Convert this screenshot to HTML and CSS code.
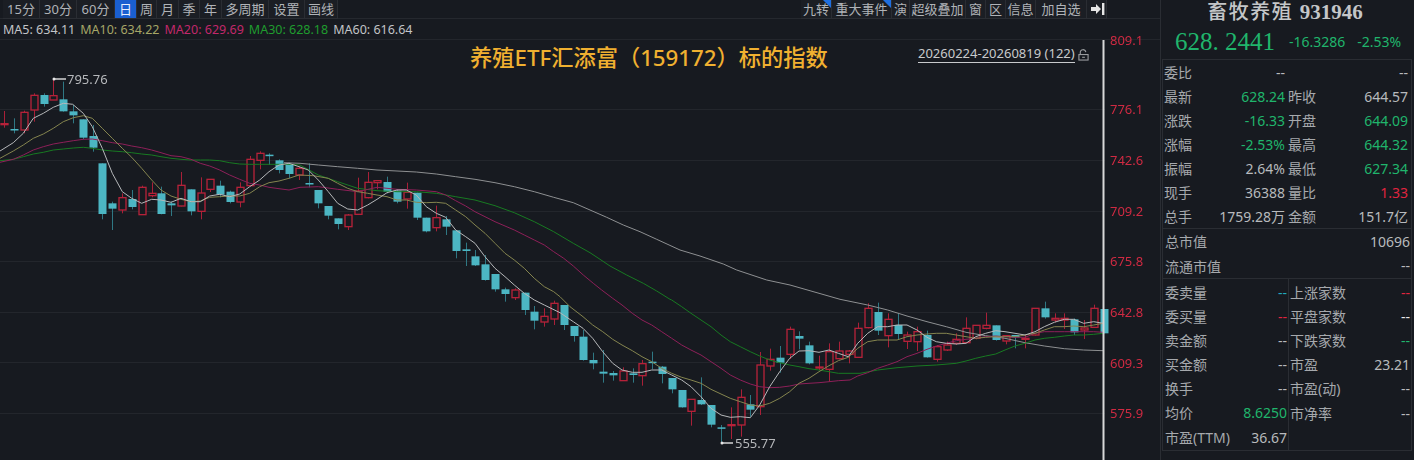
FILE: index.html
```html
<!DOCTYPE html>
<html lang="zh-CN">
<head>
<meta charset="utf-8">
<title>畜牧养殖 931946</title>
<link rel="stylesheet" href="styles.css">
</head>
<body>
<div class="app">
  <main class="main">
    <nav class="toolbar">
      <div class="tools tools-left">
        <span class="tool">15分</span><span class="tool">30分</span><span class="tool">60分</span><span class="tool active">日</span><span class="tool">周</span><span class="tool">月</span><span class="tool">季</span><span class="tool">年</span><span class="tool">多周期</span><span class="tool">设置</span><span class="tool">画线</span>
      </div>
      <div class="tools tools-right">
        <span class="tool flag">九转</span><span class="tool flag">重大事件</span><span class="tool">演</span><span class="tool">超级叠加</span><span class="tool">窗</span><span class="tool">区</span><span class="tool">信息</span><span class="tool">加自选</span>
        <span class="tool"><svg class="arrow" viewBox="0 0 14 12"><path d="M0 4h5V1l5 5-5 5V8H0z"/><path d="M11 0h2.4v12H11z"/></svg></span>
      </div>
    </nav>
    <div class="ma-row">
      <span class="ma5">MA5: 634.11</span><span class="ma10">MA10: 634.22</span><span class="ma20">MA20: 629.69</span><span class="ma30">MA30: 628.18</span><span class="ma60">MA60: 616.64</span>
    </div>
    <section class="chart">
      <svg id="kline" class="kline" viewBox="0 40 1161 420"></svg>
      <h1 class="headline">养殖ETF汇添富（159172）标的指数</h1>
      <div class="range"><span class="range-text">20260224-20260819 (122)</span>
        <svg class="lock" viewBox="0 0 12 12"><path d="M2.5 5.5V3.5a3 3 0 0 1 6-.6" fill="none"/><rect x="1" y="5.5" width="10" height="6" fill="none"/><path d="M4.5 8.5h3"/></svg>
      </div>
    </section>
  </main>
  <aside class="panel">
    <div class="name">畜牧养殖 <b>931946</b></div>
    <div class="quote"><span class="price">628.&nbsp;2441</span><span class="chg">-16.3286</span><span class="chg">-2.53%</span></div>
    <div class="box">
      <div class="grid one">
        <div class="kv"><span>委比</span><em>--</em></div><div class="kv"><span>&nbsp;</span><em>--</em></div>
        <div class="kv"><span>最新</span><em class="up">628.24</em></div><div class="kv"><span>昨收</span><em>644.57</em></div>
        <div class="kv"><span>涨跌</span><em class="up">-16.33</em></div><div class="kv"><span>开盘</span><em class="up">644.09</em></div>
        <div class="kv"><span>涨幅</span><em class="up">-2.53%</em></div><div class="kv"><span>最高</span><em class="up">644.32</em></div>
        <div class="kv"><span>振幅</span><em>2.64%</em></div><div class="kv"><span>最低</span><em class="up">627.34</em></div>
        <div class="kv"><span>现手</span><em>36388</em></div><div class="kv"><span>量比</span><em class="red">1.33</em></div>
        <div class="kv"><span>总手</span><em>1759.28万</em></div><div class="kv"><span>金额</span><em>151.7亿</em></div>
      </div>
      <div class="wide">
        <div class="kv"><span>总市值</span><em>10696</em></div>
        <div class="kv"><span>流通市值</span><em>--</em></div>
      </div>
      <div class="split">
        <div class="col">
          <div class="kv"><span>委卖量</span><em class="cyan">--</em></div>
          <div class="kv"><span>委买量</span><em class="red">--</em></div>
          <div class="kv"><span>卖金额</span><em>--</em></div>
          <div class="kv"><span>买金额</span><em>--</em></div>
          <div class="kv"><span>换手</span><em>--</em></div>
          <div class="kv"><span>均价</span><em class="up">8.6250</em></div>
          <div class="kv"><span>市盈(TTM)</span><em>36.67</em></div>
        </div>
        <div class="col">
          <div class="kv"><span>上涨家数</span><em class="red">--</em></div>
          <div class="kv"><span>平盘家数</span><em class="white">--</em></div>
          <div class="kv"><span>下跌家数</span><em class="up">--</em></div>
          <div class="kv"><span>市盈</span><em>23.21</em></div>
          <div class="kv"><span>市盈(动)</span><em>--</em></div>
          <div class="kv"><span>市净率</span><em>--</em></div>
        </div>
      </div>
    </div>
  </aside>
</div>
<script src="chart.js"></script>
</body>
</html>
```
FILE: styles.css
```css
* { box-sizing: border-box; margin: 0; padding: 0; }
html, body { width: 1414px; height: 460px; overflow: hidden; background: #171a20; }
body { font-family: "Noto Sans", "Noto Sans CJK SC", sans-serif; font-size: 13px; color: #b4b7bb; }
.app { display: flex; width: 1414px; height: 460px; }
.main { width: 1161px; display: flex; flex-direction: column; border-right: 1px solid #2a2d33; }

.toolbar { height: 19px; display: flex; justify-content: space-between; padding: 0 53px 0 3px; border-bottom: 1px solid #25282e; }
.tools { display: grid; height: 19px; }
.tools-left { grid-template-columns: 37px 37px 38px 22px 20px 22px 21px 22px 47px 36px 33px; }
.tools-right { grid-template-columns: 31px 60px 18px 56px 20px 20px 30px 51px 20px; }
.tool { position: relative; display: flex; align-items: center; justify-content: center; background: #1b1e24; border-right: 1px solid #2a2d33; border-bottom: 1px solid #2a2d33; line-height: 18px; color: #b0b3b7; white-space: nowrap; }
.tool.active { background: #1a5fd0; color: #e8eefc; }
.flag::after { content: ""; position: absolute; top: 0; right: 0; border-style: solid; border-width: 0 8px 8px 0; border-color: transparent #1f6fe0 transparent transparent; }
.arrow { width: 14px; height: 12px; margin-left: 3px; fill: #e6e6e6; }

.ma-row { height: 21px; display: flex; gap: 5px; align-items: center; padding-left: 3px; font-size: 12.5px; border-bottom: 1px solid #23262c; }
.ma5, .ma60 { color: #c2c4c7; }
.ma10 { color: #a6a667; }
.ma20 { color: #c2286b; }
.ma30 { color: #1f9c2e; }

.chart { position: relative; flex: 1; }
.kline { display: block; width: 1161px; height: 420px; overflow: visible; filter: blur(.3px); }
.kline text { font-size: 13px; font-family: "Noto Sans", sans-serif; }
.grid-line { stroke: #23262c; stroke-width: 1; }
.axis { stroke: #d8d8d8; stroke-width: 2; }
.axis-label { fill: #cf2a42; }
.wick-red { stroke: #a92038; stroke-width: 1; }
.wick-cyan { stroke: #2f7884; stroke-width: 1; }
.body-red { fill: #171a20; stroke: #b8223a; stroke-width: 1.3; }
.body-cyan { fill: #4cb6c3; }
.line { fill: none; stroke-width: 1; stroke-linejoin: round; }
.l5 { stroke: #b6b8ba; }
.l10 { stroke: #85854f; }
.l20 { stroke: #8e2059; }
.l30 { stroke: #187a22; }
.l60 { stroke: #8e9092; }
.mark { stroke: #d4d4d4; stroke-width: 1.5; }
.mark-dot { fill: #e6e6e6; }
.mark-text { fill: #b6b8bb; }

.headline { position: absolute; left: 470px; top: 4px; font-size: 22.25px; line-height: 28px; font-weight: 500; color: #f0b030; white-space: nowrap; }
.range { position: absolute; left: 918px; top: 4px; display: flex; gap: 3px; align-items: flex-start; color: #c8cacc; }
.range-text { border-bottom: 1px solid #c8cacc; line-height: 18px; }
.lock { width: 11px; height: 12px; margin-top: 5px; fill: none; stroke: #9a9c9f; stroke-width: 1.2; }

.panel { flex: 1; display: flex; flex-direction: column; padding-left: 1px; font-size: 14px; }
.name { height: 24px; line-height: 24px; padding-right: 6px; text-align: center; font-size: 20px; font-weight: 500; letter-spacing: 1.5px; color: #c4c6c8; white-space: nowrap; }
.name b { font-family: "Liberation Serif", serif; font-size: 21px; letter-spacing: 0; }
.quote { height: 35px; display: flex; align-items: center; color: #20b56c; padding-left: 13px; font-size: 14px; }
.price { font-family: "Liberation Serif", serif; font-size: 25px; width: 114px; white-space: nowrap; }
.chg { margin-right: 12px; }
.box { margin-right: 2px; border: 1px solid #2a2d33; height: 392px; flex: none; }
.grid.one { display: grid; grid-template-columns: 124px 121px; grid-auto-rows: 24px; padding: 0 2px 0 1px; height: 169px; border-bottom: 1px solid #2a2d33; }
.one .kv:nth-child(odd) { padding-right: 3px; }
.wide { height: 50px; padding: 0 0 0 2px; border-bottom: 1px solid #2a2d33; }
.wide .kv { height: 24.5px; }
.split { display: flex; height: 172px; border-bottom: 1px solid #2a2d33; padding-top: 1px; }
.col { width: 125px; padding-left: 2px; }
.col + .col { width: 123px; padding-left: 1px; border-left: 1px solid #2a2d33; margin-top: -1px; padding-top: 1px; }
.col .kv { height: 24px; }
.col .kv:last-child { height: 26px; }
.kv { display: flex; justify-content: space-between; align-items: center; height: 24px; padding-right: 1px; white-space: nowrap; color: #a6a9ad; }
.kv em { font-style: normal; color: #b8babd; }
em.up { color: #20b56c; }
em.red { color: #e0243f; }
em.cyan { color: #21a9bd; }
em.white { color: #e8e8e8; }
```
FILE: chart.js
```js
(function () {
  var NS = 'http://www.w3.org/2000/svg';
  var svg = document.getElementById('kline');
  function add(tag, attrs, text) {
    var el = document.createElementNS(NS, tag);
    for (var k in attrs) el.setAttribute(k, attrs[k]);
    if (text) el.textContent = text;
    svg.appendChild(el);
    return el;
  }
  // candles: type, body top, body bottom, high, low, read at 3x from an origin y
  function seg(oy, rows) {
    return rows.map(function (r) {
      return { t: r[0], a: oy + r[1] / 3, b: oy + r[2] / 3, h: oy + r[3] / 3, l: oy + r[4] / 3 };
    });
  }
  var R = 'r', C = 'c';
  var candles = [].concat(
    seg(70, [
      [R,161,163,123,173],[C,177,179,145,190],[R,127,180,122,190],[R,76,120,70,155],[C,75,102,70,110],
      [R,77,90,28,90],[C,88,124,35,125],[C,124,136,105,160],[C,148,203,148,208],[C,198,233,165,245],
      [C,280,432,280,448],[C,400,416,395,480],[R,383,420,370,430],[C,387,411,360,418],[R,352,434,347,435],
      [R,370,377,337,382],[C,370,432,350,433],[C,400,406,395,438],[R,346,408,306,409],[C,358,424,358,436],
      [R,369,424,322,448],[R,328,358,328,366],[C,347,374,332,382],[C,365,396,362,400],[R,352,396,337,412],
      [R,268,347,258,348],[R,250,271,244,298],[C,254,257,250,285],[C,271,300,268,310],[C,282,312,278,325],
      [R,295,315,290,330]
    ]),
    seg(140, [
      [C,129,133,70,142],[C,150,190,150,205],[C,198,227,198,238],[C,235,252,235,268],[R,225,260,222,270],
      [R,153,223,113,224],[R,127,173,96,175],[R,122,128,122,148],[C,126,155,110,160],[C,152,185,148,190],
      [R,157,177,128,206],[C,158,233,158,240],[C,233,274,233,277],[R,233,263,197,274],[C,238,260,228,285],
      [C,271,333,271,355],[C,328,333,308,378],[C,349,376,330,378],[C,373,420,345,422]
    ]),
    seg(270, [
      [C,12,58,12,65],[C,58,72,53,95],[R,60,83,55,90],[C,68,120,68,135],[C,125,152,108,178],
      [R,139,156,115,170],[R,100,147,92,165],[C,105,165,105,180],[C,168,198,168,215]
    ]),
    seg(290, [
      [C,140,210,120,212],[C,210,220,188,238],[C,245,251,180,278],[C,249,256,243,272],[R,243,272,232,272],
      [C,250,255,235,278],[R,221,257,210,287],[C,215,218,185,238],[C,230,252,228,280],[C,264,298,264,310],
      [C,300,352,300,353],[R,328,364,328,407],[C,330,343,262,345],[C,345,404,345,412],[C,412,415,405,458],
      [R,404,406,352,447],[R,322,405,298,440],[C,343,359,315,380],[R,225,350,186,375],[R,208,228,176,242],
      [C,203,218,168,248],[R,118,193,110,207],[C,138,146,124,178],[C,166,220,155,223],[R,231,234,197,240],
      [R,185,238,160,275],[R,183,206,155,208],[R,183,193,180,220]
    ]),
    seg(280, [
      [R,145,232,128,233],[R,85,143,70,145],[C,96,152,68,165],[R,118,167,100,202],[C,135,162,100,178],
      [R,165,184,155,207],[R,155,185,140,213],[C,165,232,152,233],[R,200,238,195,245],[R,195,210,185,213],
      [R,178,190,160,195],[R,145,188,112,188],[R,136,175,136,178],[R,136,145,98,148],[C,136,180,136,182],
      [R,167,183,165,193],[C,165,172,165,205],[R,175,178,165,205],[R,85,165,85,167],[C,85,112,65,116],
      [R,115,120,100,127],[R,115,120,100,147],[C,118,157,115,165],[R,144,150,120,177],[R,85,142,74,143],
      [C,87,160,87,160]
    ])
  );

  function pts(ox, oy, flat) {
    var out = [];
    for (var i = 0; i < flat.length; i += 2) {
      out.push((ox + flat[i] / 3).toFixed(1) + ',' + (oy + flat[i + 1] / 3).toFixed(1));
    }
    return out;
  }
  var lines = {
    l60: [].concat(
      pts(300,140,[-48,68,0,70,55,75,113,80,173,85,231,90,291,93,349,96,409,102,467,110,525,118,585,128,643,140,703,155,761,172,820,188]),
      pts(590,190,[0,60,50,82,100,105,150,125,200,148,270,180,330,198,400,222,440,240,530,270,600,285]),
      pts(840,280,[0,58,83,75,143,90,201,108,261,125,319,140,378,157,437,167,495,175,555,188,613,198,673,206,731,210,790,212])
    ),
    l30: [].concat(
      pts(0,70,[0,272,40,268,70,260,100,252,130,247,160,240,190,237,220,234,250,232,277,235,307,240,337,243,367,245,395,248,425,252,455,255,483,260,513,265,543,268,573,270,601,270,629,270,659,272,689,278,719,282,749,283,779,283,807,283,837,283,867,283,900,285]),
      pts(300,140,[55,105,113,125,173,145,231,152,291,155,349,155,409,160,467,170,525,180,585,197,643,218,703,245,761,275,820,310]),
      pts(590,190,[0,188,30,208,60,228,110,255,160,280,200,303,240,328]),
      pts(560,290,[335,30,365,50,393,70,423,90,453,110,483,135,511,155,541,170,571,185,599,198,629,210,659,218,689,225,717,230,747,236,777,240,807,245,835,250]),
      pts(840,280,[30,280,60,280,113,270,171,263,231,258,289,255,349,250,378,243,407,235,437,228,467,222,495,210,525,198,555,190,585,180,613,175,643,172,673,168,701,165,731,165,761,163,790,160])
    ),
    l20: [].concat(
      pts(0,70,[0,277,40,268,70,255,100,240,130,230,160,222,190,217,220,212,250,208,277,207,307,212,337,218,367,222,395,228,425,233,455,240,483,248,513,257,543,260,573,268,601,280,629,288,659,300,689,315,719,328,749,340,779,345,807,352,837,356,867,360,900,352]),
      pts(300,140,[55,140,113,148,173,155,231,142,291,148,349,150,409,155,437,165,467,182,497,198,525,215,555,230,585,245,615,258,643,270,673,285,703,300,733,315,761,335,791,355,820,378,850,405,880,430]),
      pts(560,290,[125,0,158,25,186,45,217,70,246,90,275,105,305,125,335,145,365,165,393,180,423,195,453,215,483,235,511,255,541,270,571,282,599,290,629,293,659,292,689,288,717,282,747,280,777,278,807,275,835,272]),
      pts(840,280,[30,300,53,288,83,278,113,265,143,255,171,245,201,230,231,220,261,208,289,198,319,190,349,182,378,178,407,175,437,170,467,168,495,170,525,172,555,172,585,160,613,155,643,155,673,155,701,155,731,155,761,155,790,157])
    ),
    l10: [].concat(
      pts(0,70,[0,265,40,243,70,225,100,205,130,192,160,175,190,155,220,143,250,137,277,145,307,175,337,205,367,235,395,262,425,295,455,330,483,360,513,378,543,388,573,395,601,393,629,382,659,380,689,378,719,378,749,370,779,350,807,338,837,333,867,325,897,315]),
      pts(300,140,[40,107,85,115,113,130,143,145,173,155,203,160,231,165,261,170,291,180,319,180,349,187,379,188,409,187,437,190,467,210,497,230,525,255,555,280,585,310,615,340,643,360,673,385,703,415,733,440,761,455]),
      pts(560,290,[0,20,30,50,69,80,98,105,128,125,158,148,186,165,217,182,246,200,275,215,305,235,335,250,365,262,393,270,423,280,453,298,483,312,511,325,541,335,571,345,599,348,629,340,659,325,689,305,717,280,747,265,777,245,807,227,835,212]),
      pts(840,280,[25,232,53,205,83,185,113,180,143,180,171,180,201,170,231,165,261,162,289,160,319,160,349,165,378,170,407,175,437,172,467,170,495,170,525,170,555,165,585,160,613,150,643,140,673,140,701,138,731,140,761,135,790,130])
    ),
    l5: [].concat(
      pts(0,70,[0,243,40,218,70,190,100,145,130,130,160,112,190,100,218,103,250,130,277,170,307,235,337,310,367,365,395,385,425,400,455,388,483,390,513,397,543,385,573,395,601,395,629,378,659,373,689,380,719,372,749,350,779,330,807,305,837,285,867,280,897,290]),
      pts(300,140,[25,90,55,120,85,155,113,190,143,207,173,210,203,195,231,178,261,158,291,150,319,150,349,165,379,200,409,220,437,232,467,270,497,290,525,310,555,350,585,385,615,410,643,435,673,460,703,480,733,495]),
      pts(560,290,[0,68,40,95,69,115,98,145,128,185,158,220,186,240,217,247,246,247,275,240,305,240,335,255,365,270,393,290,423,320,453,355,483,375,511,382,541,380,571,383,599,345,629,290,659,245,689,205,717,183,747,182,777,187,807,180,835,190,865,200]),
      pts(840,280,[53,190,83,160,113,140,143,140,171,135,201,135,231,150,261,172,289,185,319,190,349,192,378,190,407,170,437,160,467,152,495,155,525,160,555,165,585,155,613,140,643,127,673,118,701,118,731,130,761,125,790,130])
    )
  };

  [39.5, 109.5, 160.5, 211.5, 261.5, 312.5, 362.5, 413.5].forEach(function (y) {
    add('line', { x1: 0, x2: 1105, y1: y, y2: y, 'class': 'grid-line' });
  });

  candles.forEach(function (c, i) {
    var x = Math.round(4.33 + i * 9.816);
    var red = c.t === R;
    add('line', { x1: x + 0.5, x2: x + 0.5, y1: c.h, y2: c.l, 'class': red ? 'wick-red' : 'wick-cyan' });
    if (red) {
      add('rect', { x: x - 3, y: c.a, width: 7, height: Math.max(c.b - c.a, 1), 'class': 'body-red' });
    } else {
      add('rect', { x: x - 3.5, y: c.a, width: 8, height: Math.max(c.b - c.a, 1.5), 'class': 'body-cyan' });
    }
  });

  Object.keys(lines).forEach(function (k) {
    add('polyline', { points: lines[k].join(' '), 'class': 'line ' + k });
  });

  add('line', { x1: 1103.5, x2: 1103.5, y1: 40, y2: 460, 'class': 'axis' });

  [['809.1', 40], ['776.1', 109], ['742.6', 160], ['709.2', 211], ['675.8', 261], ['642.8', 312], ['609.3', 363], ['575.9', 413]].forEach(function (a) {
    add('text', { x: 1110, y: a[1] + 4.5, 'class': 'axis-label' }, a[0]);
  });

  add('line', { x1: 54, x2: 66, y1: 79, y2: 79, 'class': 'mark' });
  add('circle', { cx: 54, cy: 79, r: 1.5, 'class': 'mark-dot' });
  add('text', { x: 67, y: 83.5, 'class': 'mark-text' }, '795.76');
  add('line', { x1: 722, x2: 733, y1: 443, y2: 443, 'class': 'mark' });
  add('circle', { cx: 722, cy: 443, r: 1.5, 'class': 'mark-dot' });
  add('text', { x: 735, y: 447.5, 'class': 'mark-text' }, '555.77');
})();
```
